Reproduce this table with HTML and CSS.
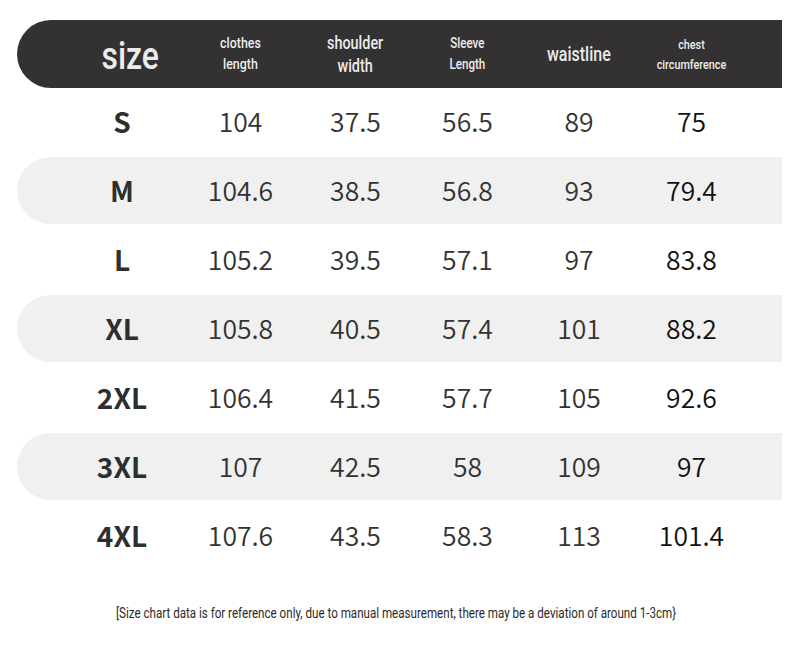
FILE: index.html
```html
<!DOCTYPE html>
<html>
<head>
<meta charset="utf-8">
<link rel="stylesheet" href="styles.css">
</head>
<body>
<div class="chart">
  <div class="row head">
    <div class="cell size-h"><span class="cond">size</span></div>
    <div class="cell h-sm"><span class="cond">clothes<br>length</span></div>
    <div class="cell h-md"><span class="cond">shoulder<br>width</span></div>
    <div class="cell h-sl"><span class="cond">Sleeve<br>Length</span></div>
    <div class="cell h-lg"><span class="cond">waistline</span></div>
    <div class="cell h-xs"><span class="cond">chest<br>circumference</span></div>
  </div>
  <div class="rows">
    <div class="row"><div class="cell sz">S</div><div class="cell">104</div><div class="cell">37.5</div><div class="cell">56.5</div><div class="cell">89</div><div class="cell dark">75</div></div>
    <div class="row alt"><div class="cell sz">M</div><div class="cell">104.6</div><div class="cell">38.5</div><div class="cell">56.8</div><div class="cell">93</div><div class="cell dark">79.4</div></div>
    <div class="row"><div class="cell sz">L</div><div class="cell">105.2</div><div class="cell">39.5</div><div class="cell">57.1</div><div class="cell">97</div><div class="cell dark">83.8</div></div>
    <div class="row alt"><div class="cell sz">XL</div><div class="cell">105.8</div><div class="cell">40.5</div><div class="cell">57.4</div><div class="cell">101</div><div class="cell dark">88.2</div></div>
    <div class="row"><div class="cell sz">2XL</div><div class="cell">106.4</div><div class="cell">41.5</div><div class="cell">57.7</div><div class="cell">105</div><div class="cell dark">92.6</div></div>
    <div class="row alt"><div class="cell sz">3XL</div><div class="cell">107</div><div class="cell">42.5</div><div class="cell">58</div><div class="cell">109</div><div class="cell dark">97</div></div>
    <div class="row"><div class="cell sz">4XL</div><div class="cell">107.6</div><div class="cell">43.5</div><div class="cell">58.3</div><div class="cell">113</div><div class="cell dark">101.4</div></div>
  </div>
  <div class="note"><span class="cond">[Size chart data is for reference only, due to manual measurement, there may be a deviation of around 1-3cm}</span></div>
</div>
</body>
</html>
```
FILE: styles.css
```css
html, body {
  margin: 0;
  padding: 0;
  background: #ffffff;
}
.chart {
  width: 790px;
  padding-top: 20px;
}
.row {
  display: grid;
  grid-template-columns: 120px 117px 113px 111px 112px 113px;
  margin-left: 17px;
  width: 765px;
  padding-left: 45px;
  box-sizing: border-box;
  height: 67px;
  align-items: center;
}
.head {
  height: 68px;
  background: #333132;
  border-radius: 34px 0 0 34px;
  color: #ececec;
}
.rows {
  display: flex;
  flex-direction: column;
  gap: 2px;
}
.rows .row {
  padding-bottom: 1px;
}
.alt {
  background: #f0f0f0;
  border-radius: 34px 0 0 34px;
}
.cell {
  text-align: center;
  font-family: "Noto Sans CJK SC", "Noto Sans", sans-serif;
  font-weight: 350;
  font-size: 26.5px;
  color: #333333;
  line-height: 1;
}
.dark {
  color: #111111;
}
.sz {
  font-weight: 700;
  font-size: 28px;
  color: #2e2e2e;
}
.head .cell {
  font-family: Roboto, "Liberation Sans", sans-serif;
  color: #ececec;
  font-weight: 500;
}
.cond {
  display: inline-block;
  transform: scaleX(0.8);
  transform-origin: center;
  white-space: nowrap;
}
.size-h {
  padding-left: 16px;
  font-size: 38px !important;
}
.size-h .cond {
  transform: scaleX(0.84);
  position: relative;
  top: 2px;
}
.h-sm {
  font-size: 15.5px !important;
  line-height: 21px !important;
}
.h-sl {
  font-size: 14.5px !important;
  line-height: 21px !important;
}
.h-md {
  font-size: 18px !important;
  line-height: 23px !important;
}
.h-lg {
  font-size: 20px !important;
}
.h-xs {
  font-size: 13.5px !important;
  line-height: 20px !important;
}
.note {
  margin-top: 36px;
  text-align: center;
  width: 790px;
  font-family: Roboto, "Liberation Sans", sans-serif;
  font-size: 14.5px;
  color: #2a2a2a;
}
.note .cond {
  transform: scaleX(0.8);
  position: relative;
  left: 1px;
}
```
